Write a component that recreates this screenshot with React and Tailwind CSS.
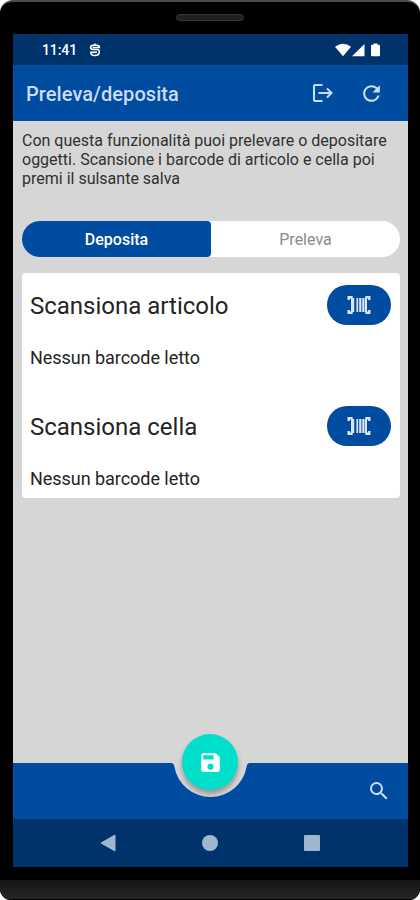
import { MdRefresh, MdSave, MdSearch } from 'react-icons/md'

function StatusBar() {
  return (
    <div className="flex h-[31px] items-center justify-between bg-[#00336b] pr-[27px] pl-[29px] text-white">
      <div className="flex items-center gap-[12px]">
        <span className="text-[14px] leading-none font-medium tracking-[-0.1px]">11:41</span>
        <svg width="12" height="14" viewBox="0 0 12 14" fill="none" stroke="currentColor" strokeWidth="1.5">
          <path d="M6 .5v2M10.500 4.800Q10.500 2.200 8 2.200H4.200Q1.600 2.200 1.600 4.300T4 6.500h4.200Q10.300 6.500 10.300 8.800Q10.300 12.600 6 12.600T1.700 8.500M3.500 4.500H11M1.500 9.200H8" />
        </svg>
      </div>
      <svg width="46" height="14" viewBox="0 0 46 14" fill="currentColor">
        <path d="M0 3.700Q8 -2.300 16 3.700L8 13.200Z" />
        <path d="M17 13.200L29.500 1v12.200Z" />
        <path d="M38.500 .5h4v1.200h1.500q1 0 1 1v9.500q0 1-1 1h-7q-1 0-1-1v-9.500q0-1 1-1H38.500Z" />
      </svg>
    </div>
  )
}

function AppBar() {
  return (
    <header className="flex h-14 items-center justify-between bg-[#004ca0] pr-[24px] pl-[13px] text-[#ccdcf5]">
      <h1 className="pt-px text-[20px] font-medium tracking-[0.07px]">Preleva/deposita</h1>
      <div className="flex items-center gap-[26px]">
        <button aria-label="Esci">
          <svg width="21" height="20" viewBox="0 0 21 20" fill="none" stroke="currentColor" strokeWidth="2">
            <path d="M10.500 2H3Q2 2 2 3v14q0 1 1 1h7.500M6.500 10H19.500M15 5.500l4.500 4.500-4.500 4.500" />
          </svg>
        </button>
        <button aria-label="Aggiorna">
          <MdRefresh size={25} />
        </button>
      </div>
    </header>
  )
}

function BarcodeIcon() {
  return (
    <svg width="24" height="20" viewBox="0 0 24 20" fill="none" stroke="currentColor">
      <path strokeWidth="2.400" d="M1.700 5V2.200h4M18.300 2.200h4V5M1.700 15v2.800h4M18.300 17.800h4V15" />
      <path strokeWidth="3.200" d="M5.600 3v14" />
      <path strokeWidth="1.700" d="M10.300 3v14" />
      <path strokeWidth="2.200" d="M13.300 3v14M16.400 3v14" />
      <path strokeWidth="2" d="M19 3v14" />
    </svg>
  )
}

function ScanRow({ title }) {
  return (
    <div className="h-[121px] pt-3">
      <div className="flex items-center justify-between">
        <h2 className="pt-[2px] text-[24px]">{title}</h2>
        <button
          aria-label={title}
          className="flex h-10 w-16 items-center justify-center rounded-full bg-[#004ca0] text-[#dde4f8]"
        >
          <BarcodeIcon />
        </button>
      </div>
      <p className="mt-[19px] text-[18px] leading-[27px] tracking-[-0.04px]">Nessun barcode letto</p>
    </div>
  )
}

function BottomBar() {
  return (
    <div className="relative flex h-[56px] items-center justify-end pr-[17px] text-[#ccdcf5]">
      <svg className="absolute inset-0" width="395" height="56" viewBox="0 0 395 56" fill="#004ca0">
        <path d="M0 0H158Q161 0 161.500 4A36.500 36 0 0 0 233.500 4Q234 0 237 0H395V56H0Z" />
      </svg>
      <button
        aria-label="Salva"
        className="absolute -top-[29px] left-[169px] flex h-14 w-14 items-center justify-center rounded-full bg-[#00dfca] text-white shadow-[0_4px_5px_rgba(0,0,0,0.3)]"
      >
        <MdSave size={25} />
      </button>
      <button aria-label="Cerca" className="relative pb-px">
        <MdSearch size={24} />
      </button>
    </div>
  )
}

function NavBar() {
  return (
    <div className="flex h-[48px] items-center justify-between bg-[#00336b] pr-[88px] pl-[87px] text-[#a0b6ce]">
      <svg width="16" height="18" viewBox="0 0 16 18" fill="currentColor">
        <path d="M15 1v16L1 9Z" stroke="currentColor" strokeLinejoin="round" />
      </svg>
      <div className="h-4 w-4 rounded-full bg-current" />
      <div className="h-4 w-4 rounded-[1px] bg-current" />
    </div>
  )
}

export default function App() {
  return (
    <div className="h-[900px] w-[420px] bg-white font-['Roboto',sans-serif]">
      <div className="flex h-full flex-col overflow-hidden rounded-t-[13px] rounded-b-[11px] border-t-2 border-[#4b4b4b] bg-black">
        <div className="flex h-8 shrink-0 justify-center pt-[12px]">
          <div className="h-[7px] w-[68px] rounded-full border border-[#383838] bg-[#202020]" />
        </div>

        <div className="ml-[13px] flex h-[833px] w-[395px] shrink-0 flex-col bg-[#d6d6d6]">
          <StatusBar />
          <AppBar />
          <main className="flex flex-1 flex-col pr-2 pl-[9px] pt-[10px] text-[#303030]">
            <p className="h-[90px] text-[16px] leading-[19px]">
              Con questa funzionalità puoi prelevare o depositare oggetti. Scansione i barcode di articolo e cella poi
              premi il sulsante salva
            </p>
            <div className="flex h-9 overflow-hidden rounded-full bg-white text-[16px]">
              <button className="w-1/2 rounded-r-[4px] bg-[#004ca0] pt-px font-medium text-white">Deposita</button>
              <button className="w-1/2 pt-px text-[#8b8b8b]">Preleva</button>
            </div>
            <section className="mt-4 h-[225px] rounded-[4px] bg-white pr-[9px] pl-2 text-[#242424]">
              <ScanRow title="Scansiona articolo" />
              <ScanRow title="Scansiona cella" />
            </section>
          </main>
          <BottomBar />
          <NavBar />
        </div>

        <div className="mt-[13px] flex-1 border-b border-black bg-linear-to-b from-[#151515] to-[#272727]" />
      </div>
    </div>
  )
}
